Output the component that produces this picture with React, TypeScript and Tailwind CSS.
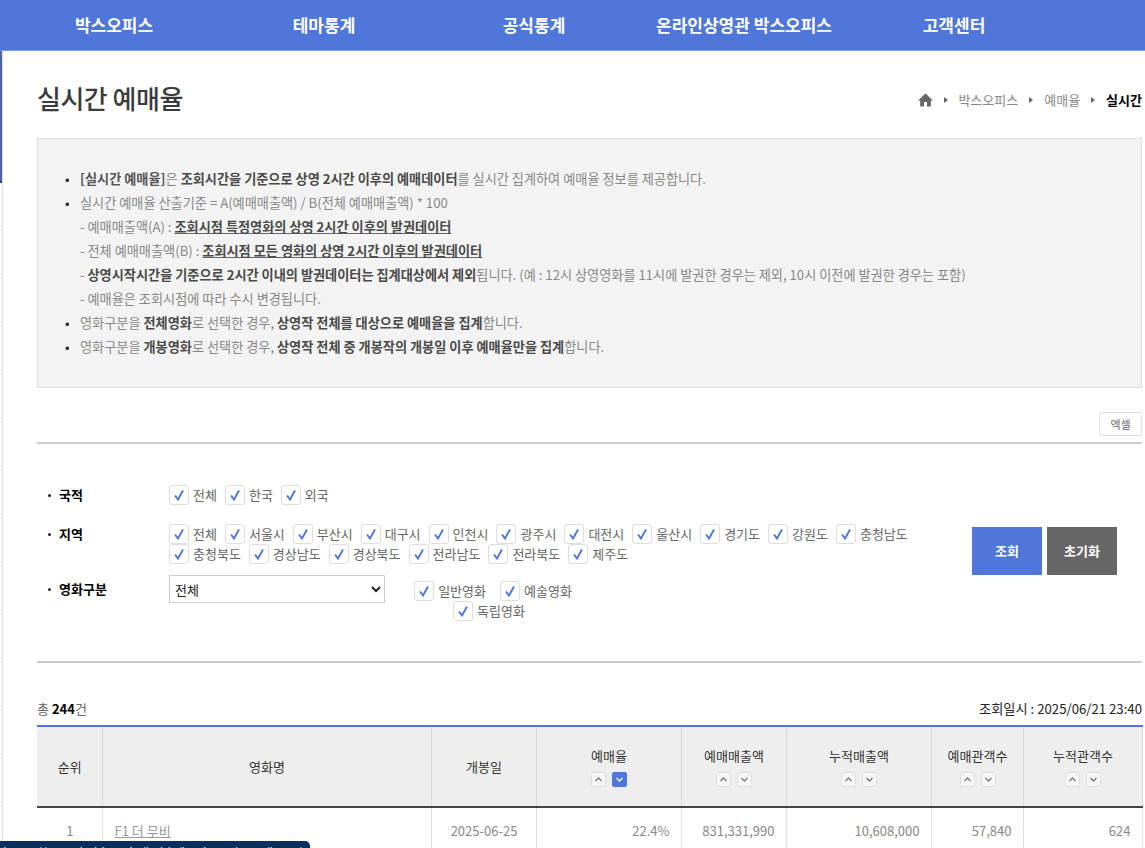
const font = "font-['Noto_Sans_CJK_KR','Noto_Sans',sans-serif]"

const navItems = ["박스오피스", "테마통계", "공식통계", "온라인상영관 박스오피스", "고객센터"]
const regionsA = ["전체", "서울시", "부산시", "대구시", "인천시", "광주시", "대전시", "울산시", "경기도", "강원도", "충청남도"]
const regionsB = ["충청북도", "경상남도", "경상북도", "전라남도", "전라북도", "제주도"]
const sliverRows = [48, 48, 48, 48, 48, 48, 48, 48, 48, 48, 48, 48, 48, 48]

function Check({ label }: { label: string }) {
  return (
    <label className="flex items-center gap-[4px] h-[20px] text-[13px] text-[#666] whitespace-nowrap">
      <span className="w-[20px] h-[20px] rounded-[3px] border border-[#ddd] bg-white flex items-center justify-center shrink-0">
        <svg width="12" height="12" viewBox="0 0 12 12" fill="none">
          <path d="M2 6.5 L5 10.5 L10 1.5" stroke="#4f76d9" strokeWidth="1.9" />
        </svg>
      </span>
      {label}
    </label>
  )
}

function Sort({ up, active }: { up?: boolean; active?: boolean }) {
  return (
    <span
      className={`w-[15px] h-[15px] rounded-[2px] border flex items-center justify-center ${
        active ? "bg-[#4f76d9] border-[#4f76d9]" : "bg-[#f6f6f6] border-[#ddd]"
      }`}
    >
      <svg width="9" height="7" viewBox="0 0 9 7" fill="none">
        <path
          d={up ? "M1.5 5 L4.5 2 L7.5 5" : "M1.5 2 L4.5 5 L7.5 2"}
          stroke={active ? "#fff" : "#777"}
          strokeWidth="1.3"
        />
      </svg>
    </span>
  )
}

function SortHead({ title, active }: { title: string; active?: boolean }) {
  return (
    <th className="border-x border-[#d8d8d8] font-normal align-middle">
      <div className="flex flex-col items-center gap-[7px] pl-[1px]">
        <span>{title}</span>
        <span className="flex gap-[6px]">
          <Sort up />
          <Sort active={active} />
        </span>
      </div>
    </th>
  )
}

function Arrow() {
  return <span className="w-0 h-0 border-y-[3px] border-y-transparent border-l-[4px] border-l-[#666]" />
}

function Bullet() {
  return <span className="absolute left-0 text-[#222]">•</span>
}

export default function App() {
  return (
    <div className={`${font} h-[848px] w-[1145px] overflow-hidden relative bg-white text-[13px] text-[#777]`}>
      {/* Top nav */}
      <div className="h-[51px] bg-[#4f76d9] border-b border-b-[#7d9ae4] flex pl-[9px]">
        {navItems.map((n) => (
          <a key={n} className="w-[210px] text-center text-white font-bold text-[17px] leading-[50px] whitespace-nowrap">
            {n}
          </a>
        ))}
      </div>

      <div className="flex">
        {/* Sliver of the left panel */}
        <div className="w-[3px] shrink-0 border-r border-[#ddd]">
          <div className="h-[130px] bg-[#4a62ad]" />
          <div className="h-[2px] bg-[#444]" />
          {sliverRows.map((h, i) => (
            <div key={i} style={{ height: h }} className="border-b border-[#e4e4e4]" />
          ))}
        </div>

        <div className="ml-[34px] w-[1105px]">
          {/* Title row */}
          <div className="flex items-start justify-between h-[87px]">
            <h1 className="mt-[28px] text-[26px] leading-[38px] font-medium text-[#3c3c3c] tracking-[-0.5px]">실시간 예매율</h1>
            <div className="flex items-center text-[13px] text-[#888] mt-[39px]">
              <svg width="15" height="14" viewBox="0 0 15 14" className="mr-[11px]">
                <path d="M7.5 0.5 L15 7.5 L12.8 7.5 L12.8 13.5 L9 13.5 L9 9 L6 9 L6 13.5 L2.2 13.5 L2.2 7.5 L0 7.5 Z" fill="#666" />
              </svg>
              <Arrow />
              <span className="ml-[10px] mr-[11px]">박스오피스</span>
              <Arrow />
              <span className="ml-[11px] mr-[11px]">예매율</span>
              <Arrow />
              <b className="ml-[11px] text-black">실시간</b>
            </div>
          </div>

          {/* Info box */}
          <div className="h-[250px] border border-[#ddd] bg-[#f3f3f3] pt-[28px] pl-[27px] text-[13.17px] leading-[24px] text-[#888]">
            <ul className="list-none">
              <li className="relative pl-[15px]">
                <Bullet />
                <b className="text-[#555]">[실시간 예매율]</b>은 <b className="text-[#4a4a4a]">조회시간을 기준으로 상영 2시간 이후의 예매데이터</b>를 실시간 집계하여 예매율 정보를 제공합니다.
              </li>
              <li className="relative pl-[15px]">
                <Bullet />
                실시간 예매율 산출기준 = A(예매매출액) / B(전체 예매매출액) * 100
              </li>
              <li className="pl-[15px]">
                - 예매매출액(A) : <b className="text-[#4a4a4a] underline decoration-[#666]">조회시점 특정영화의 상영 2시간 이후의 발권데이터</b>
              </li>
              <li className="pl-[15px]">
                - 전체 예매매출액(B) : <b className="text-[#4a4a4a] underline decoration-[#666]">조회시점 모든 영화의 상영 2시간 이후의 발권데이터</b>
              </li>
              <li className="pl-[15px]">
                - <b className="text-[#4a4a4a]">상영시작시간을 기준으로 2시간 이내의 발권데이터는 집계대상에서 제외</b>됩니다. (예 : 12시 상영영화를 11시에 발권한 경우는 제외, 10시 이전에 발권한 경우는 포함)
              </li>
              <li className="pl-[15px]">- 예매율은 조회시점에 따라 수시 변경됩니다.</li>
              <li className="relative pl-[15px]">
                <Bullet />
                영화구분을 <b className="text-[#4a4a4a]">전체영화</b>로 선택한 경우, <b className="text-[#4a4a4a]">상영작 전체를 대상으로 예매율을 집계</b>합니다.
              </li>
              <li className="relative pl-[15px]">
                <Bullet />
                영화구분을 <b className="text-[#4a4a4a]">개봉영화</b>로 선택한 경우, <b className="text-[#4a4a4a]">상영작 전체 중 개봉작의 개봉일 이후 예매율만을 집계</b>합니다.
              </li>
            </ul>
          </div>

          {/* Excel */}
          <div className="flex justify-end mt-[24px]">
            <button className="w-[43px] h-[24px] border border-[#ddd] rounded-[2px] bg-white text-[11px] text-[#666]">엑셀</button>
          </div>
          <div className="h-[2px] bg-[#ccc] mt-[6px]" />

          {/* Filters */}
          <div className="flex mt-[41px] h-[176px]">
            <div className="w-[920px] shrink-0">
              <div className="flex h-[20px] items-center">
                <span className="w-[132px] pl-[11px] font-bold text-black flex items-center">
                  <span className="w-[3px] h-[3px] rounded-full bg-[#222] mr-[8px]" />
                  국적
                </span>
                <div className="flex gap-[8px]">
                  <Check label="전체" />
                  <Check label="한국" />
                  <Check label="외국" />
                </div>
              </div>

              <div className="flex mt-[19px]">
                <span className="w-[132px] pl-[11px] font-bold text-black flex items-center h-[20px]">
                  <span className="w-[3px] h-[3px] rounded-full bg-[#222] mr-[8px]" />
                  지역
                </span>
                <div className="flex flex-col">
                  <div className="flex gap-[8px]">
                    {regionsA.map((r) => (
                      <Check key={r} label={r} />
                    ))}
                  </div>
                  <div className="flex gap-[8px]">
                    {regionsB.map((r) => (
                      <Check key={r} label={r} />
                    ))}
                  </div>
                </div>
              </div>

              <div className="flex mt-[11px]">
                <span className="w-[132px] pl-[11px] font-bold text-black flex items-center h-[28px]">
                  <span className="w-[3px] h-[3px] rounded-full bg-[#222] mr-[8px]" />
                  영화구분
                </span>
                <select className="w-[216px] h-[28px] border border-[#ccc] bg-white text-[13px] text-[#222] pl-[1px]">
                  <option>전체</option>
                </select>
                <div className="ml-[23px] w-[170px] flex flex-wrap justify-center gap-x-[14px] pt-[6px]">
                  <Check label="일반영화" />
                  <Check label="예술영화" />
                  <div className="mr-[8px]">
                    <Check label="독립영화" />
                  </div>
                </div>
              </div>
            </div>

            <div className="flex gap-[5px] ml-[15px] mt-[42px]">
              <button className="w-[70px] h-[48px] bg-[#4f76d9] text-white font-bold text-[13px]">조회</button>
              <button className="w-[70px] h-[48px] bg-[#666] text-white font-bold text-[13px]">초기화</button>
            </div>
          </div>

          <div className="h-[2px] bg-[#ccc]" />

          {/* Results meta */}
          <div className="flex justify-between items-center mt-[36px] h-[20px] text-[#222]">
            <span>
              <span className="text-[#666]">총</span> <b className="text-black">244</b>
              <span className="text-[#666]">건</span>
            </span>
            <span className="text-[13.2px]">조회일시 : 2025/06/21 23:40</span>
          </div>

          {/* Table */}
          <table className="mt-[6px] w-[1105px] table-fixed border-collapse border-t-2 border-t-[#4f76d9]">
            <colgroup>
              <col className="w-[65px]" />
              <col className="w-[329px]" />
              <col className="w-[105px]" />
              <col className="w-[145px]" />
              <col className="w-[105px]" />
              <col className="w-[145px]" />
              <col className="w-[92px]" />
              <col className="w-[119px]" />
            </colgroup>
            <thead>
              <tr className="h-[81px] bg-[#eeeeee] text-[#333] text-[13px] border-b-[2px] border-b-[#444]">
                <th className="font-normal pl-[1px]">순위</th>
                <th className="border-x border-[#d8d8d8] font-normal pl-[1px]">영화명</th>
                <th className="border-x border-[#d8d8d8] font-normal pl-[1px]">개봉일</th>
                <SortHead title="예매율" active />
                <SortHead title="예매매출액" />
                <SortHead title="누적매출액" />
                <SortHead title="예매관객수" />
                <SortHead title="누적관객수" />
              </tr>
            </thead>
            <tbody>
              <tr className="h-[46px] text-[13px] text-[#888]">
                <td className="text-center pl-[1px]">1</td>
                <td className="border-x border-[#ddd] pl-[12px]">
                  <a className="underline text-[#999]">F1 더 무비</a>
                </td>
                <td className="border-x border-[#ddd] text-center pl-[1px]">2025-06-25</td>
                <td className="border-x border-[#ddd] text-right pr-[11px]">22.4%</td>
                <td className="border-x border-[#ddd] text-right pr-[11px]">831,331,990</td>
                <td className="border-x border-[#ddd] text-right pr-[11px]">10,608,000</td>
                <td className="border-x border-[#ddd] text-right pr-[11px]">57,840</td>
                <td className="border-x border-[#ddd] text-right pr-[11px]">624</td>
              </tr>
            </tbody>
          </table>
        </div>
      </div>

      {/* Browser link status bubble */}
      <div className="absolute left-0 top-[841px] w-[310px] h-[20px] rounded-tr-[5px] bg-[#0b2f5c] text-[12.5px] leading-[22px] text-[#ddd] pl-[3px] overflow-hidden whitespace-nowrap">
        https://www.kobis.or.kr/kobis/business/stats/boxs/movie.do
      </div>
    </div>
  )
}
